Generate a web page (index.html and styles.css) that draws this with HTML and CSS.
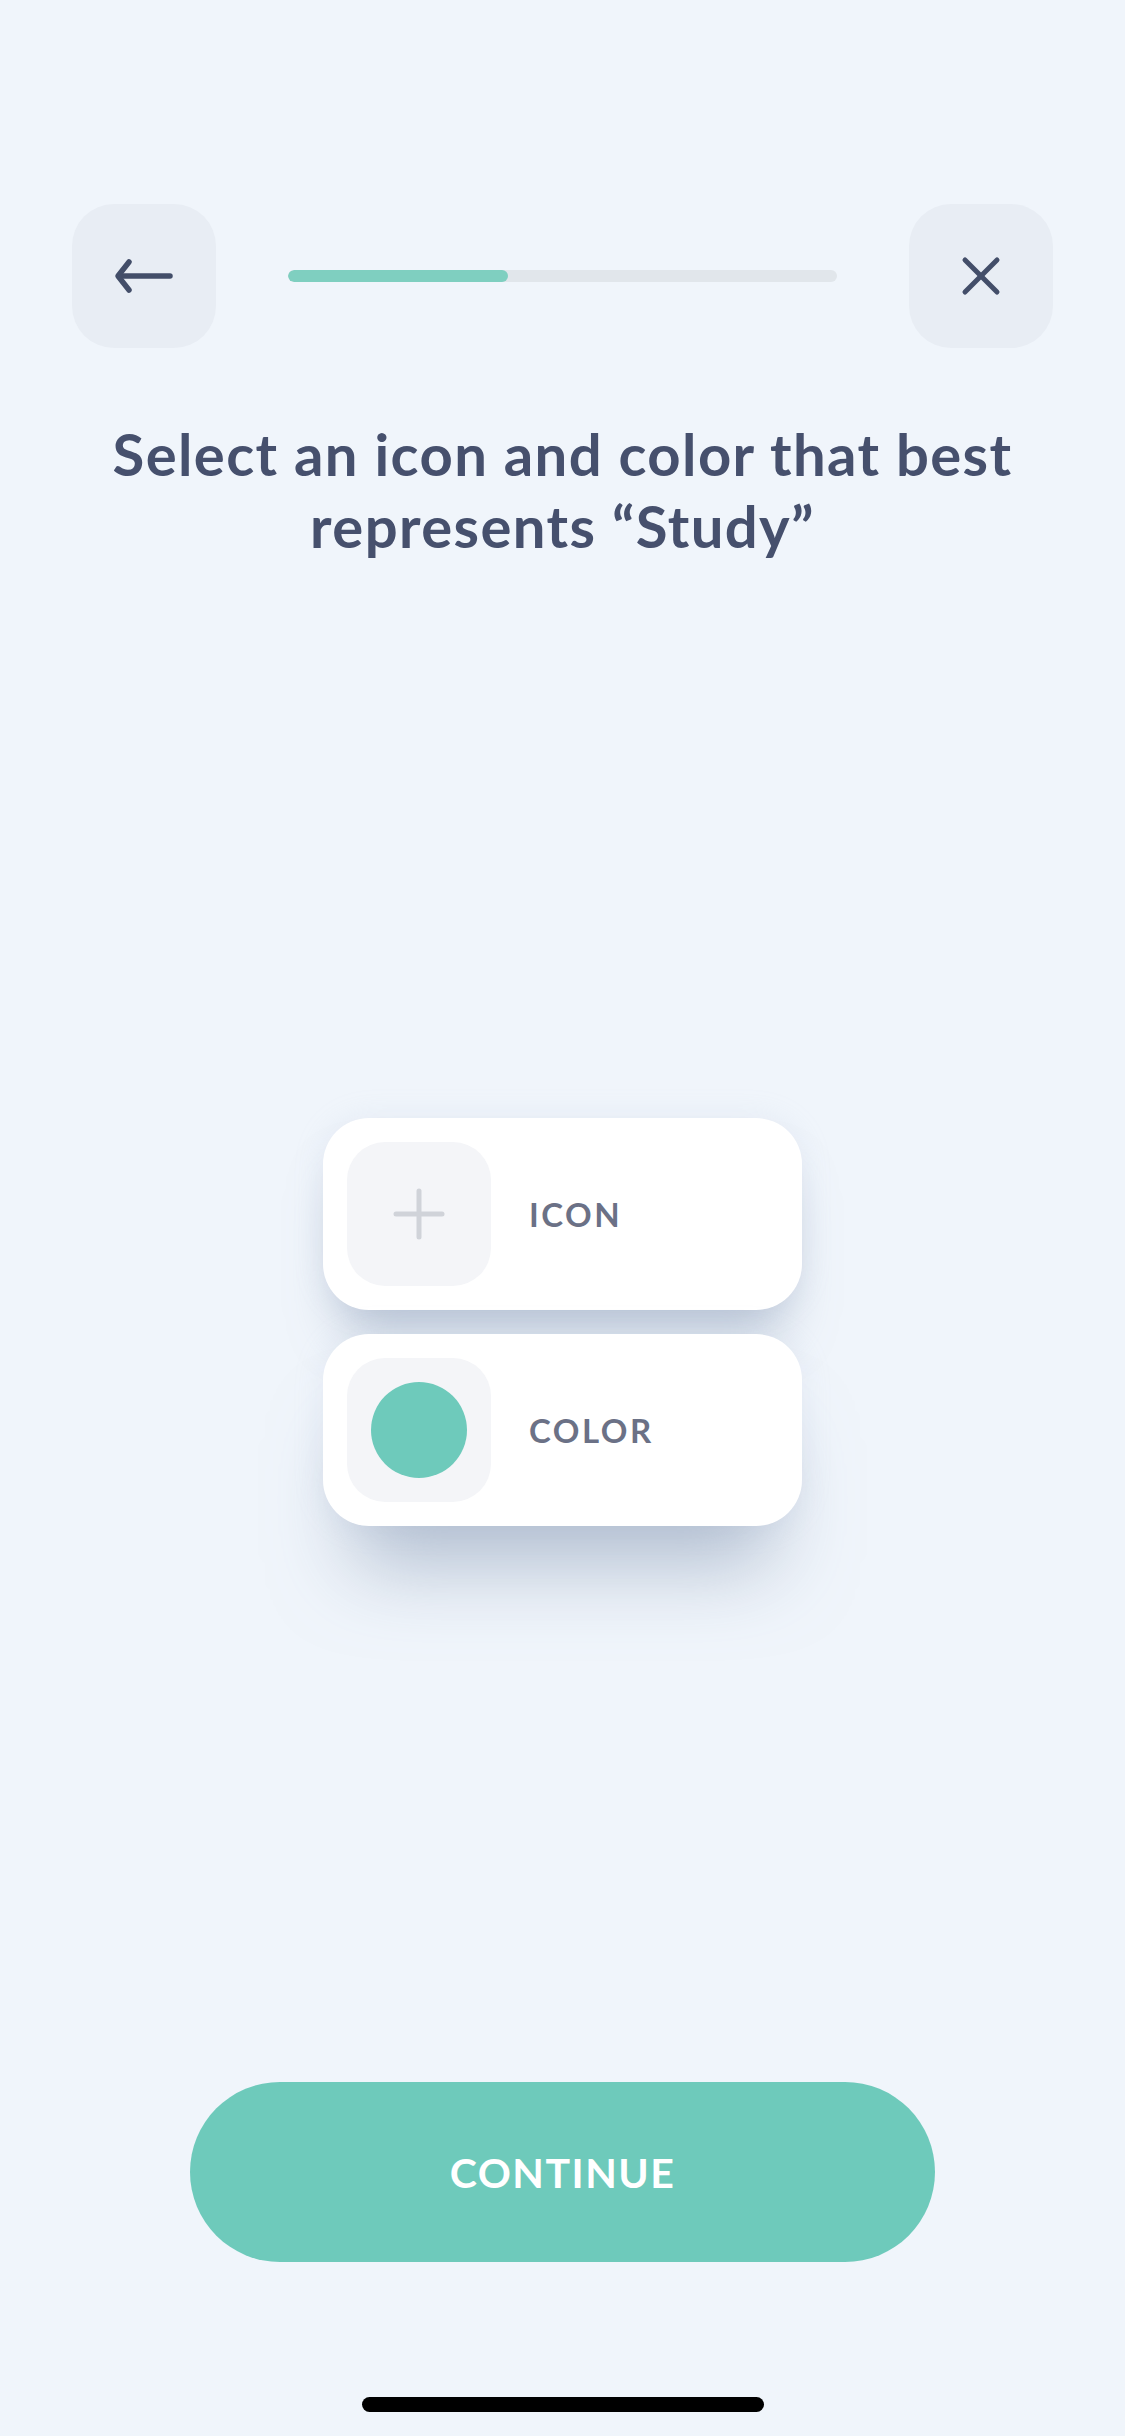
FILE: index.html
```html
<!DOCTYPE html>
<html lang="en">
<head>
    <meta charset="UTF-8">
    <meta name="viewport" content="width=device-width, initial-scale=1.0">
    <title>Select icon and color</title>
    <link rel="stylesheet" href="styles.css">
</head>
<body>
    <div class="screen">
        <header class="top-bar">
            <button class="square-button" aria-label="Back">
                <svg width="60" height="36" viewBox="0 0 60 36" fill="none" stroke="#434e69" stroke-width="5.5" stroke-linecap="round" stroke-linejoin="round">
                    <path d="M56 18H5"/>
                    <path d="M15 4L4 18L15 32"/>
                </svg>
            </button>
            <div class="progress" role="progressbar" aria-valuenow="40" aria-valuemin="0" aria-valuemax="100">
                <div class="progress-fill" style="width: 40%;"></div>
            </div>
            <button class="square-button" aria-label="Close">
                <svg width="40" height="40" viewBox="0 0 40 40" fill="none" stroke="#434e69" stroke-width="5" stroke-linecap="round">
                    <path d="M4 4L36 36"/>
                    <path d="M36 4L4 36"/>
                </svg>
            </button>
        </header>

        <h1 class="title">Select an icon and color that best represents “Study”</h1>

        <main class="picker">
            <div class="picker-cards">
                <div class="picker-card">
                    <div class="picker-swatch">
                        <svg width="52" height="52" viewBox="0 0 52 52" fill="none" stroke="#d0d3d9" stroke-width="5" stroke-linecap="round">
                            <path d="M26 3V49"/>
                            <path d="M3 26H49"/>
                        </svg>
                    </div>
                    <span class="picker-label">ICON</span>
                </div>
                <div class="picker-card">
                    <div class="picker-swatch">
                        <div class="color-dot"></div>
                    </div>
                    <span class="picker-label">COLOR</span>
                </div>
            </div>
        </main>

        <footer class="bottom">
            <button class="continue-button">CONTINUE</button>
            <div class="home-indicator"></div>
        </footer>
    </div>
</body>
</html>
```

FILE: styles.css
```css
html, body {
    margin: 0;
    padding: 0;
}

body {
    background-color: #f0f5fb;
    font-family: Lato, "Open Sans", Arial, sans-serif;
    color: #454f6b;
}

.screen {
    width: 1125px;
    height: 2436px;
    display: flex;
    flex-direction: column;
    align-items: center;
}

.top-bar {
    box-sizing: border-box;
    width: 100%;
    padding: 204px 72px 0;
    display: flex;
    align-items: center;
    gap: 72px;
}

.square-button {
    width: 144px;
    height: 144px;
    flex-shrink: 0;
    border: none;
    border-radius: 42px;
    background-color: #e8edf4;
    display: flex;
    align-items: center;
    justify-content: center;
    padding: 0;
    cursor: pointer;
}

.progress {
    flex: 1;
    height: 12px;
    border-radius: 6px;
    background-color: #e1e6eb;
    overflow: hidden;
}

.progress-fill {
    height: 100%;
    border-radius: 6px;
    background-color: #7fcfc0;
}

.title {
    width: 1000px;
    margin: 70px 0 0;
    font-size: 58px;
    font-weight: 700;
    line-height: 72px;
    letter-spacing: 1.4px;
    text-align: center;
    color: #46506d;
}

.picker {
    margin-top: 556px;
}

.picker-cards {
    width: 479px;
    display: flex;
    flex-direction: column;
    gap: 24px;
}

.picker-card {
    box-sizing: border-box;
    height: 192px;
    padding: 24px;
    display: flex;
    align-items: center;
    gap: 38px;
    background-color: #ffffff;
    border-radius: 46px;
    box-shadow: 0 40px 50px -18px rgba(130, 148, 175, 0.5), 0 0 30px rgba(180, 195, 215, 0.18);
}

.picker-card:last-child {
    box-shadow: 0 70px 80px -30px rgba(130, 148, 175, 0.55), 0 0 30px rgba(180, 195, 215, 0.18);
}

.picker-swatch {
    width: 144px;
    height: 144px;
    border-radius: 38px;
    background-color: #f4f5f8;
    display: flex;
    align-items: center;
    justify-content: center;
}

.color-dot {
    width: 96px;
    height: 96px;
    border-radius: 50%;
    background-color: #6ecabb;
}

.picker-label {
    font-size: 33px;
    font-weight: 700;
    letter-spacing: 2.5px;
    color: #6b7186;
}

.bottom {
    margin-top: auto;
    display: flex;
    flex-direction: column;
    align-items: center;
}

.continue-button {
    width: 745px;
    height: 180px;
    border: none;
    border-radius: 90px;
    background-color: #6ecabb;
    color: #ffffff;
    font-family: Lato, "Open Sans", Arial, sans-serif;
    font-size: 41px;
    font-weight: 700;
    letter-spacing: 1.5px;
    cursor: pointer;
}

.home-indicator {
    width: 402px;
    height: 15px;
    margin: 135px 0 24px;
    border-radius: 8px;
    background-color: #000000;
}
```
